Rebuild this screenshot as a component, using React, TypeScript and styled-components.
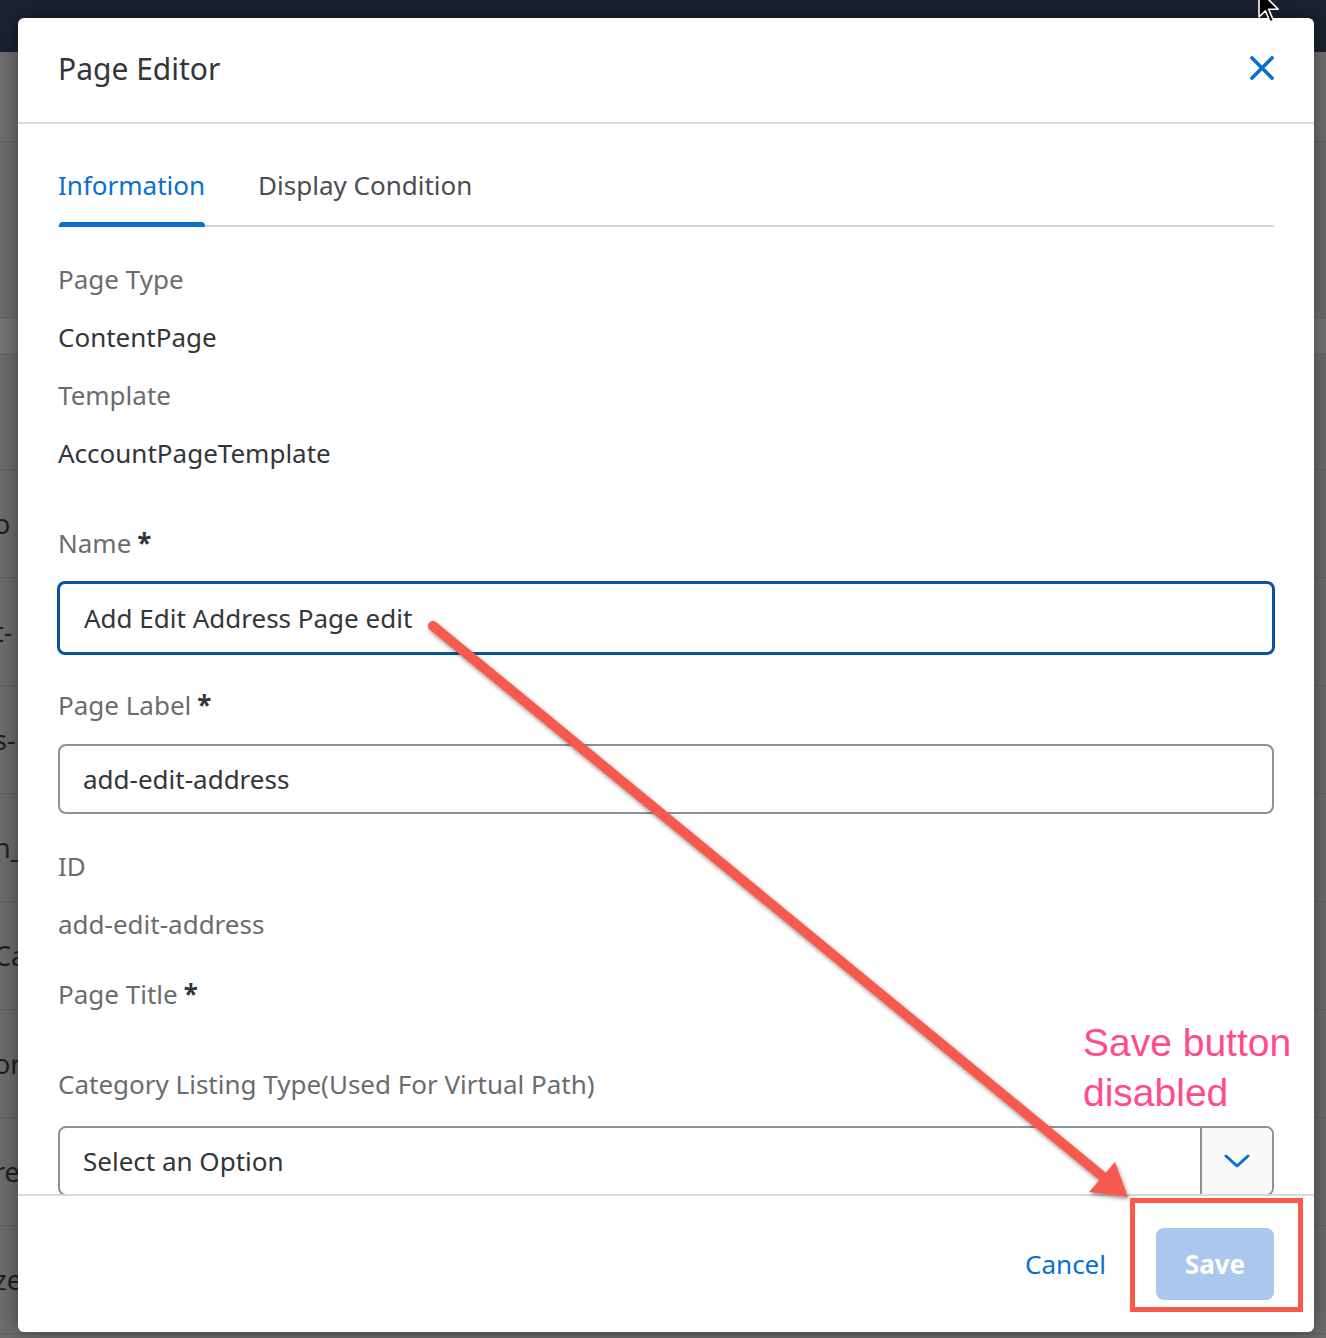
import React from "react";
import styled, { createGlobalStyle } from "styled-components";

const GlobalStyle = createGlobalStyle`
  html, body {
    margin: 0;
    padding: 0;
    background: #6b6b6b;
  }
  * {
    box-sizing: border-box;
  }
`;

const Page = styled.div`
  position: relative;
  width: 1326px;
  height: 1338px;
  overflow: hidden;
  background: #6d6d6d;
  font-family: "Noto Sans", "Open Sans", sans-serif;
`;

const TopBar = styled.div`
  height: 52px;
  background: #1b2330;
`;

const TableHead = styled.div`
  height: 90px;
  border-bottom: 1px solid #5e5e5e;
  background: #707070;
`;

const BackRow = styled.div<{ $h: number; $tone?: string }>`
  height: ${(p) => p.$h}px;
  display: flex;
  align-items: center;
  justify-content: space-between;
  border-bottom: 1px solid #616161;
  background: ${(p) => p.$tone || "#6e6e6e"};
  color: #1f1f1f;
  font-size: 27px;
`;

const BackText = styled.span`
  margin-left: -6px;
  white-space: nowrap;
`;

const Dialog = styled.div`
  position: absolute;
  left: 18px;
  top: 18px;
  width: 1296px;
  height: 1314px;
  background: #fff;
  border-radius: 6px;
  box-shadow: 0 0 22px rgba(0, 0, 0, 0.45);
  display: flex;
  flex-direction: column;
  overflow: hidden;
`;

const Header = styled.header`
  height: 106px;
  flex-shrink: 0;
  display: flex;
  align-items: center;
  justify-content: space-between;
  padding: 0 40px;
  border-bottom: 2px solid #d9d9d9;
`;

const Title = styled.h1`
  margin: 0;
  margin-top: -4px;
  font-size: 30px;
  font-weight: 400;
  color: #32363a;
`;

const CloseButton = styled.button`
  border: 0;
  background: none;
  padding: 0;
  width: 24px;
  height: 24px;
  margin-top: -4px;
  display: flex;
  cursor: pointer;
`;

const Body = styled.div`
  flex: 1;
  overflow: hidden;
  padding: 0 40px;
`;

const TabBar = styled.div`
  display: flex;
  gap: 53px;
  margin-top: 24px;
  border-bottom: 2px solid #d5d7db;
`;

const Tab = styled.div<{ $active?: boolean }>`
  position: relative;
  padding: 19px 0 22px;
  font-size: 26px;
  line-height: 36px;
  color: ${(p) => (p.$active ? "#0a6ed1" : "#4a4e53")};
  &::after {
    content: "";
    display: ${(p) => (p.$active ? "block" : "none")};
    position: absolute;
    left: 1px;
    right: 0;
    bottom: -2px;
    height: 5px;
    border-radius: 4px 4px 0 0;
    background: #0a6ed1;
  }
`;

const InfoList = styled.div`
  margin-top: 23px;
  display: flex;
  flex-direction: column;
`;

const InfoLine = styled.div<{ $value?: boolean }>`
  height: 58px;
  line-height: 58px;
  font-size: 26px;
  color: ${(p) => (p.$value ? "#32363a" : "#6a6d70")};
`;

const Label = styled.label<{ $top: number }>`
  display: block;
  margin-top: ${(p) => p.$top}px;
  margin-bottom: 21px;
  line-height: 36px;
  font-size: 26px;
  color: #6a6d70;
`;

const Required = styled.span`
  margin-left: 6px;
  color: #32363a;
  font-weight: 700;
`;

const TextInput = styled.div<{ $focused?: boolean }>`
  height: ${(p) => (p.$focused ? 74 : 70)}px;
  margin: ${(p) => (p.$focused ? "-1px -1px 0" : "0")};
  border: ${(p) => (p.$focused ? "3px solid #0854a0" : "2px solid #89919a")};
  border-radius: 8px;
  display: flex;
  align-items: center;
  padding-left: ${(p) => (p.$focused ? 24 : 23)}px;
  font-size: 26px;
  color: #32363a;
`;

const Select = styled.div`
  height: 70px;
  margin-top: 24px;
  border: 2px solid #89919a;
  border-radius: 8px;
  display: flex;
  overflow: hidden;
`;

const SelectValue = styled.div`
  flex: 1;
  display: flex;
  align-items: center;
  padding-left: 23px;
  font-size: 26px;
  color: #32363a;
`;

const SelectButton = styled.div`
  width: 72px;
  border-left: 2px solid #89919a;
  background: #fafafa;
  display: flex;
  align-items: center;
  justify-content: center;
`;

const Footer = styled.footer`
  height: 138px;
  flex-shrink: 0;
  border-top: 2px solid #d9d9d9;
  display: flex;
  align-items: center;
  justify-content: flex-end;
  gap: 28px;
  padding: 0 40px;
`;

const CancelButton = styled.button`
  border: 0;
  background: none;
  height: 72px;
  padding: 0 22px;
  font-family: inherit;
  font-size: 26px;
  color: #0a6ed1;
`;

const SaveButton = styled.button`
  border: 0;
  width: 118px;
  height: 72px;
  border-radius: 8px;
  background: #abc7ee;
  color: #fff;
  font-family: inherit;
  font-size: 26px;
  font-weight: 700;
`;

const Overlay = styled.svg`
  position: absolute;
  left: 0;
  top: 0;
  pointer-events: none;
`;

const Note = styled.div`
  position: absolute;
  left: 1083px;
  top: 1018px;
  font-family: "Liberation Sans", Arial, sans-serif;
  font-size: 39px;
  line-height: 50px;
  color: #ff4b8b;
`;

const backRows = [
  { h: 176, t: "" },
  { h: 37, t: "", tone: "#767676" },
  { h: 115, t: "" },
  { h: 108, t: "o" },
  { h: 108, t: "t-" },
  { h: 108, t: "s-l" },
  { h: 108, t: "n_" },
  { h: 108, t: "Ca" },
  { h: 108, t: "or" },
  { h: 108, t: "re" },
  { h: 108, t: "ze" },
];

export default function App() {
  return (
    <Page>
      <GlobalStyle />
      <TopBar />
      <TableHead />
      {backRows.map((r, i) => (
        <BackRow key={i} $h={r.h} $tone={r.tone}>
          <BackText>{r.t}</BackText>
        </BackRow>
      ))}

      <Dialog>
        <Header>
          <Title>Page Editor</Title>
          <CloseButton aria-label="Close">
            <svg width="24" height="24" viewBox="0 0 24 24">
              <path
                d="M2 2 L22 22 M22 2 L2 22"
                stroke="#0a6ed1"
                strokeWidth="3.6"
                strokeLinecap="square"
              />
            </svg>
          </CloseButton>
        </Header>

        <Body>
          <TabBar>
            <Tab $active>Information</Tab>
            <Tab>Display Condition</Tab>
          </TabBar>

          <InfoList>
            <InfoLine>Page Type</InfoLine>
            <InfoLine $value>ContentPage</InfoLine>
            <InfoLine>Template</InfoLine>
            <InfoLine $value>AccountPageTemplate</InfoLine>
          </InfoList>

          <Label $top={43}>
            Name<Required>*</Required>
          </Label>
          <TextInput $focused>Add Edit Address Page edit</TextInput>

          <Label $top={32}>
            Page Label<Required>*</Required>
          </Label>
          <TextInput>add-edit-address</TextInput>

          <InfoList>
            <InfoLine>ID</InfoLine>
            <InfoLine>add-edit-address</InfoLine>
          </InfoList>

          <Label $top={23}>
            Page Title<Required>*</Required>
          </Label>

          <Label $top={54}>Category Listing Type(Used For Virtual Path)</Label>
          <Select>
            <SelectValue>Select an Option</SelectValue>
            <SelectButton>
              <svg width="26" height="16" viewBox="0 0 26 16">
                <path
                  d="M2 3 L13 13 L24 3"
                  fill="none"
                  stroke="#0a6ed1"
                  strokeWidth="3"
                  strokeLinecap="round"
                  strokeLinejoin="round"
                />
              </svg>
            </SelectButton>
          </Select>
        </Body>

        <Footer>
          <CancelButton>Cancel</CancelButton>
          <SaveButton disabled>Save</SaveButton>
        </Footer>
      </Dialog>

      <Note>
        Save button
        <br />
        disabled
      </Note>

      <Overlay width="1326" height="1338" viewBox="0 0 1326 1338">
        <defs>
          <filter id="shadow" x="-10%" y="-10%" width="120%" height="120%">
            <feDropShadow dx="1" dy="2" stdDeviation="2" floodColor="#000" floodOpacity="0.45" />
          </filter>
        </defs>
        <g filter="url(#shadow)">
          <line
            x1="433"
            y1="626"
            x2="1102"
            y2="1176"
            stroke="#f65a4f"
            strokeWidth="10"
            strokeLinecap="round"
          />
          <polygon points="1128,1197 1089,1192 1115,1162" fill="#f65a4f" />
        </g>
        <rect
          x="1132.5"
          y="1200.5"
          width="168"
          height="109"
          fill="none"
          stroke="#fa5a4c"
          strokeWidth="5"
        />
        <path
          d="M1259 -10 L1259 17 L1265.4 10.8 L1270.2 22 L1273.4 20.4 L1268.6 9.2 L1278.2 9.2 Z"
          fill="#000"
          stroke="#fff"
          strokeWidth="1.6"
          strokeLinejoin="round"
        />
      </Overlay>
    </Page>
  );
}
